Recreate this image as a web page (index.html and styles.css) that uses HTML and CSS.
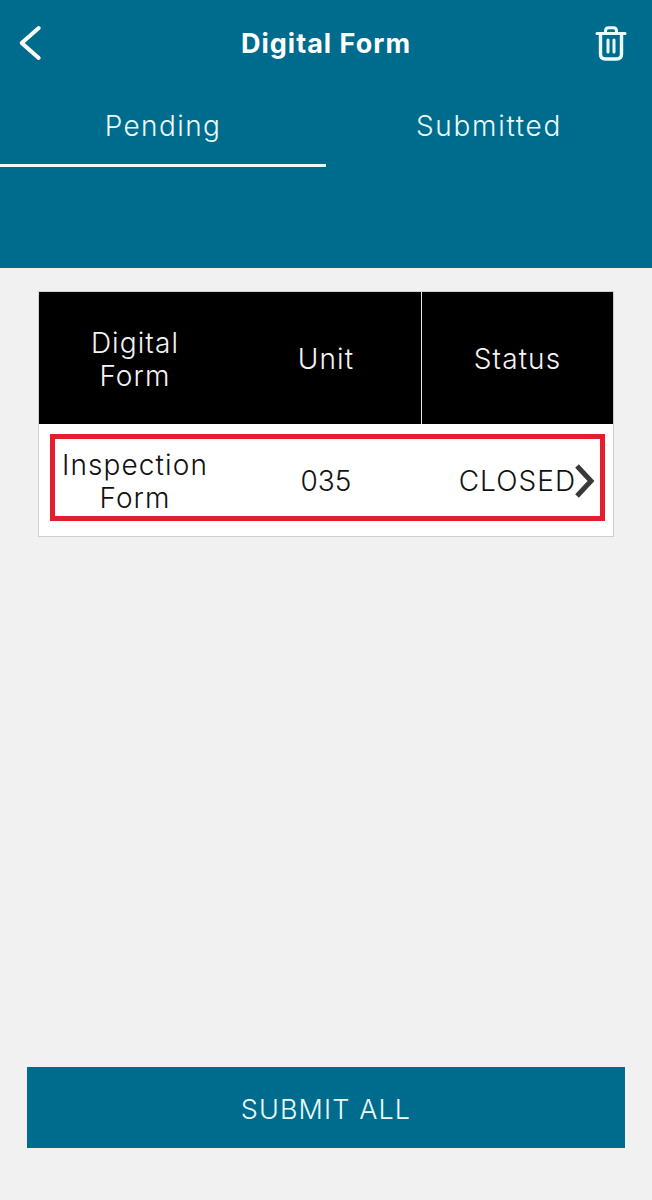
FILE: index.html
```html
<!DOCTYPE html>
<html lang="en">
<head>
<meta charset="utf-8">
<title>Digital Form</title>
<link rel="stylesheet" href="styles.css">
</head>
<body>
<div class="screen">
  <header class="header">
    <div class="topbar">
      <svg class="icon-back" viewBox="0 0 24 36" width="24" height="36" aria-hidden="true"><path d="M20.7 3 L3.7 18 L20.7 33"/></svg>
      <h1 class="title">Digital Form</h1>
      <svg class="icon-trash" viewBox="0 0 32 36" width="32" height="36" aria-hidden="true">
        <path class="thin" d="M2 8.5 H30"/>
        <path class="thin" d="M10.5 8 V6 Q10.5 2.8 13.5 2.8 H18.5 Q21.5 2.8 21.5 6 V8"/>
        <path class="thick" d="M5.5 9 V29 Q5.5 34 10.5 34 H21.5 Q26.5 34 26.5 29 V9"/>
        <path class="thin" d="M13 15 V27 M19 15 V27"/>
      </svg>
    </div>
    <nav class="tabs">
      <div class="tab tab-active"><span class="tab-pending">Pending</span></div>
      <div class="tab"><span class="tab-submitted">Submitted</span></div>
    </nav>
  </header>
  <main class="content">
    <section class="table">
      <div class="thead">
        <div class="th th-form">Digital<br>Form</div>
        <div class="th th-unit">Unit</div>
        <div class="th th-status">Status</div>
      </div>
      <div class="tbody">
        <div class="row">
          <div class="td td-form">Inspection<br><span class="form-word">Form</span></div>
          <div class="td td-unit">035</div>
          <div class="td td-status">CLOSED
            <svg class="icon-chevron" viewBox="0 0 24 36" width="24" height="36" aria-hidden="true"><path d="M3 3 L17 18 L3 33"/></svg>
          </div>
        </div>
      </div>
    </section>
    <button class="submit" type="button">SUBMIT ALL</button>
  </main>
</div>
</body>
</html>
```

FILE: styles.css
```css
* { box-sizing: border-box; }
html, body { margin: 0; padding: 0; }
body {
  background: #f1f1f1;
  font-family: Inter, "Open Sans", "Liberation Sans", sans-serif;
  color: #111;
}
.screen {
  display: flex;
  flex-direction: column;
  width: 652px;
  height: 1200px;
}
.header {
  height: 268px;
  background: #006c8d;
  color: #eafcfc;
  flex: none;
}
.topbar {
  display: grid;
  grid-template-columns: 1fr auto 1fr;
  align-items: center;
  height: 86px;
  padding: 0 25px;
}
.icon-back { margin-left: -7px; }
.icon-trash { justify-self: end; }
.title {
  margin: 0;
  font-size: 27px;
  font-weight: 700;
  letter-spacing: 1px;
  color: #fff;
}
.icon-back path {
  fill: none;
  stroke: #fff;
  stroke-width: 4;
  stroke-linecap: round;
  stroke-linejoin: round;
}
.icon-trash { fill: none; stroke: #eafcfc; }
.icon-trash .thin { stroke-width: 3; stroke-linecap: round; }
.icon-trash .thick { stroke-width: 3.4; }
.tabs { display: flex; height: 81px; }
.tab {
  flex: 1;
  display: flex;
  justify-content: center;
  padding-top: 20px;
  font-size: 28px;
  font-weight: 300;
  line-height: 40px;
  letter-spacing: 1.4px;
}
.tab-submitted { letter-spacing: 1.7px; }
.tab-active { border-bottom: 3px solid #eafcfc; }
.content {
  flex: 1;
  display: flex;
  flex-direction: column;
  padding: 23px 27px 52px;
}
.table {
  margin: 0 11px;
  background: #fff;
  border: 1px solid #cfcfcf;
  height: 246px;
}
.thead {
  display: grid;
  grid-template-columns: 192px 190px 1fr;
  height: 132px;
  background: #000;
  color: #f4f4f4;
}
.th {
  display: flex;
  align-items: center;
  justify-content: center;
  padding-top: 3px;
  text-align: center;
  font-size: 28px;
  font-weight: 300;
  line-height: 33px;
  letter-spacing: 1.1px;
}
.th-status { border-left: 1px solid #e8e8e8; }
.tbody { padding: 10px 8px 16px 11px; }
.row {
  display: grid;
  grid-template-columns: 160px 222px 1fr;
  height: 87px;
  border: 5px solid #e41f2d;
}
.td {
  display: flex;
  align-items: center;
  justify-content: center;
  text-align: center;
  font-size: 28px;
  font-weight: 300;
  line-height: 33px;
  letter-spacing: 1.1px;
  color: #111;
}
.td-form { display: block; padding-top: 10px; }
.td-unit { padding-top: 8px; letter-spacing: 0; }
.td-status { position: relative; padding-top: 8px; padding-right: 2px; }
.icon-chevron {
  position: absolute;
  top: 24px;
  right: 2px;
}
.icon-chevron path {
  fill: none;
  stroke: #3a3a3a;
  stroke-width: 5;
}
.submit {
  margin-top: auto;
  height: 81px;
  padding: 4px 0 0;
  border: 0;
  background: #006c8d;
  color: #eafcfc;
  font-family: inherit;
  font-size: 27px;
  font-weight: 300;
  letter-spacing: 1.1px;
}
```
